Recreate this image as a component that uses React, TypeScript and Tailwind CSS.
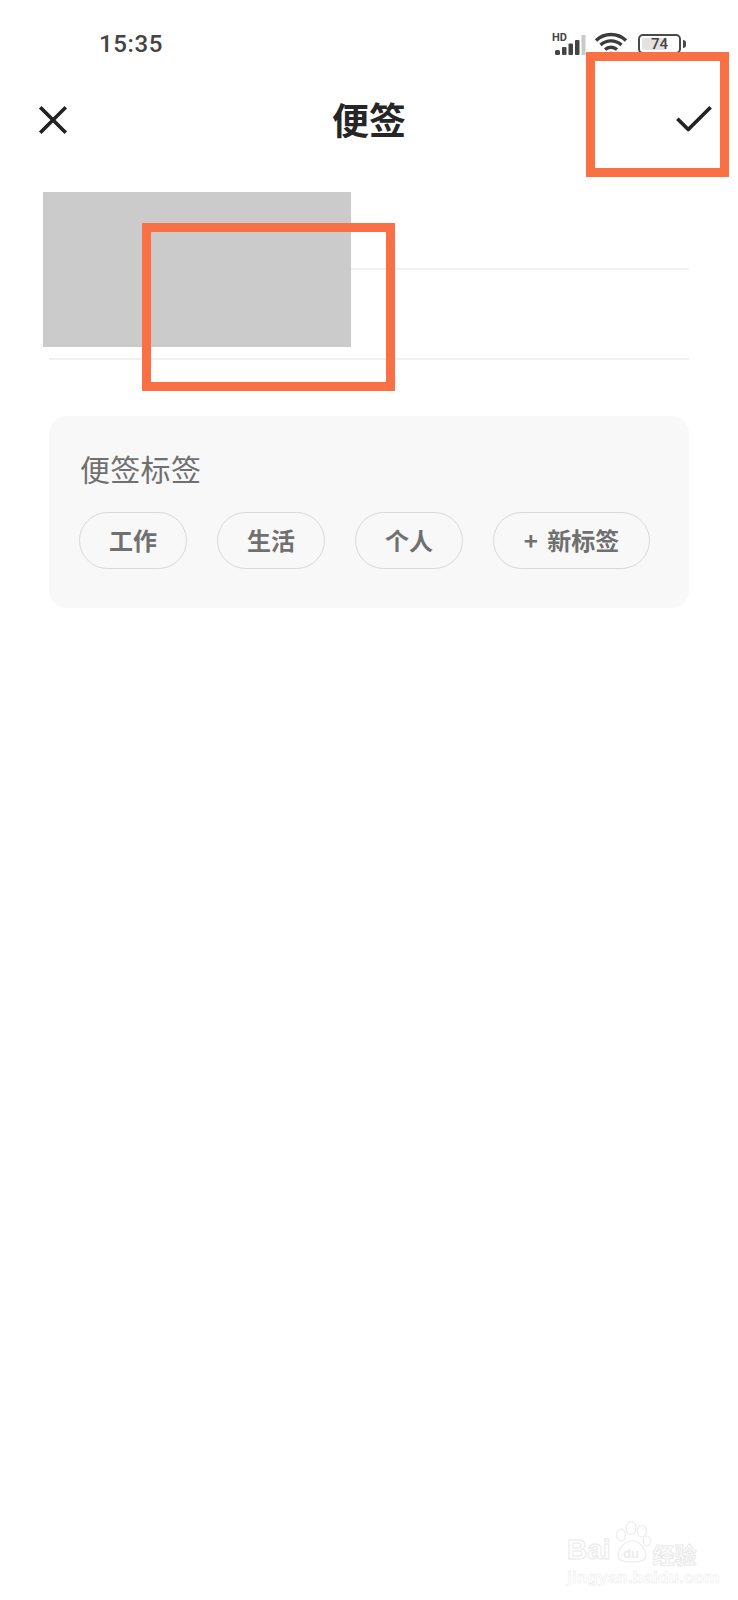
import { X, Check } from 'lucide-react';

const CJK = "font-['Noto_Sans_CJK_SC','Noto_Sans',sans-serif]";

const TAGS = ['工作', '生活', '个人'];

function TagChip({ label, wide }: { label: string; wide?: boolean }) {
  return (
    <div
      className={`flex h-[57px] items-center justify-center rounded-full border border-[#d9d9d9] pb-[1px] text-[24px] leading-none font-bold text-[#707070] ${
        wide ? 'w-[157px] [word-spacing:4px]' : 'w-[108px]'
      }`}
    >
      {label}
    </div>
  );
}

function StatusIcons() {
  return (
    <div className="flex items-center">
      {/* HD + signal */}
      <svg width="36" height="24" viewBox="0 0 36 24" className="mr-[6px]">
        <text x="0" y="8.5" fontSize="11" fontWeight="700" fontFamily="Roboto, sans-serif" fill="#444444">
          HD
        </text>
        <rect x="3" y="18" width="5" height="5" rx="1.5" fill="#444444" />
        <rect x="10" y="15" width="4.5" height="8" rx="1" fill="#444444" />
        <rect x="16.5" y="11.5" width="4.5" height="11.5" rx="1" fill="#444444" />
        <rect x="23" y="8" width="4.5" height="15" rx="1" fill="#444444" />
        <rect x="29.5" y="3" width="4" height="20" fill="#c9c9c9" />
      </svg>
      {/* wifi */}
      <svg width="34" height="24" viewBox="0 0 34 24" fill="none" stroke="#3c3c3c" strokeWidth="3.4" className="mr-[10px] mb-[2px]">
        <path d="M2 9.5C10.5 1.5 23.5 1.5 32 9.5" />
        <path d="M6.5 14C12.5 8.5 21.5 8.5 27.5 14" />
        <path d="M11 18.5C14.5 15.5 19.5 15.5 23 18.5" />
        <circle cx="17" cy="22" r="1.5" fill="#3c3c3c" stroke="none" />
      </svg>
      {/* battery */}
      <div className="relative flex h-[20px] w-[43px] items-center rounded-[5px] border-2 border-[#4a4a4a] p-[2px]">
        <div className="h-full w-[24px] rounded-[2px] bg-[#e2e2e2]" />
        <span className="absolute inset-0 flex items-center justify-center font-['Roboto',sans-serif] text-[15px] leading-none font-medium text-[#444444]">
          74
        </span>
      </div>
      <div className="ml-[2px] h-[8px] w-[3px] rounded-r-sm bg-[#4a4a4a]" />
    </div>
  );
}

function Watermark() {
  return (
    <div className="absolute top-[1520px] left-[567px] w-[140px] text-white">
      <div className="flex items-end">
        <span className="font-['Liberation_Sans',sans-serif] text-[28px] leading-none font-bold [-webkit-text-stroke:1px_#e9e9e9]">
          Bai
        </span>
        <svg width="42" height="44" viewBox="0 0 42 44" fill="none" stroke="#ececec" strokeWidth="1.2">
          <ellipse cx="10" cy="15" rx="4.5" ry="6" />
          <ellipse cx="20" cy="8" rx="5" ry="6.5" />
          <ellipse cx="31" cy="11" rx="4.5" ry="6" />
          <ellipse cx="36" cy="21" rx="3.5" ry="5" />
          <path d="M7 36c0-8 7-15 14-15s14 7 14 15c0 5-6 6-14 6s-14-1-14-6z" />
          <text x="12" y="38" fontSize="13" fontWeight="700" fontFamily="Liberation Sans, sans-serif" fill="#ececec" stroke="none">
            du
          </text>
        </svg>
        <span className={`${CJK} text-[22px] leading-none font-bold [-webkit-text-stroke:1px_#e9e9e9]`}>经验</span>
      </div>
      <div className="mt-[5px] font-['Liberation_Sans',sans-serif] text-[17px] leading-none font-bold tracking-[0.2px] whitespace-nowrap [-webkit-text-stroke:0.6px_#ededed]">
        jingyan.baidu.com
      </div>
    </div>
  );
}

export default function App() {
  return (
    <div className={`relative h-[1600px] w-[738px] overflow-hidden bg-white ${CJK}`}>
      {/* Status bar */}
      <div className="flex h-[86px] items-center justify-between pt-[2px] pr-[52px] pl-[99px]">
        <span className="font-['Roboto',sans-serif] text-[24px] leading-none font-medium tracking-[0.6px] text-[#444444]">15:35</span>
        <StatusIcons />
      </div>

      {/* Title bar */}
      <div className="grid h-[68px] grid-cols-[1fr_auto_1fr] items-center pr-[21px] pl-[30px]">
        <X size={46} strokeWidth={1.9} strokeLinecap="square" className="justify-self-start text-[#222222]" />
        <span className="mr-[9px] pb-[2px] text-[37px] leading-none font-bold text-[#262626]">便签</span>
        <Check size={46} strokeWidth={1.9} strokeLinecap="square" className="justify-self-end text-[#222222]" />
      </div>

      <div className="px-[49px]">
        {/* Empty inputs */}
        <div className="h-[116px] border-b-2 border-[#f1f1f1]" />
        <div className="h-[90px] border-b-2 border-[#f1f1f1]" />

        {/* Tags card */}
        <div className="mt-[56px] h-[192px] rounded-[18px] bg-[#f8f8f8] pt-[32px] pl-[30px]">
          <div className="ml-[1px] text-[30px] leading-[40px] tracking-[0.3px] text-[#707070]">便签标签</div>
          <div className="mt-[24px] flex gap-[30px]">
            {TAGS.map((t) => (
              <TagChip key={t} label={t} />
            ))}
            <TagChip label="+ 新标签" wide />
          </div>
        </div>
      </div>

      {/* Redaction block + annotation frames */}
      <div className="absolute top-[192px] left-[43px] h-[155px] w-[308px] bg-[#cbcbcb]" />
      <div className="absolute top-[223px] left-[142px] h-[168px] w-[253px] border-[9px] border-[#f97044]" />
      <div className="absolute top-[52px] left-[586px] h-[125px] w-[143px] border-[9px] border-[#f97044]" />

      <Watermark />
    </div>
  );
}
